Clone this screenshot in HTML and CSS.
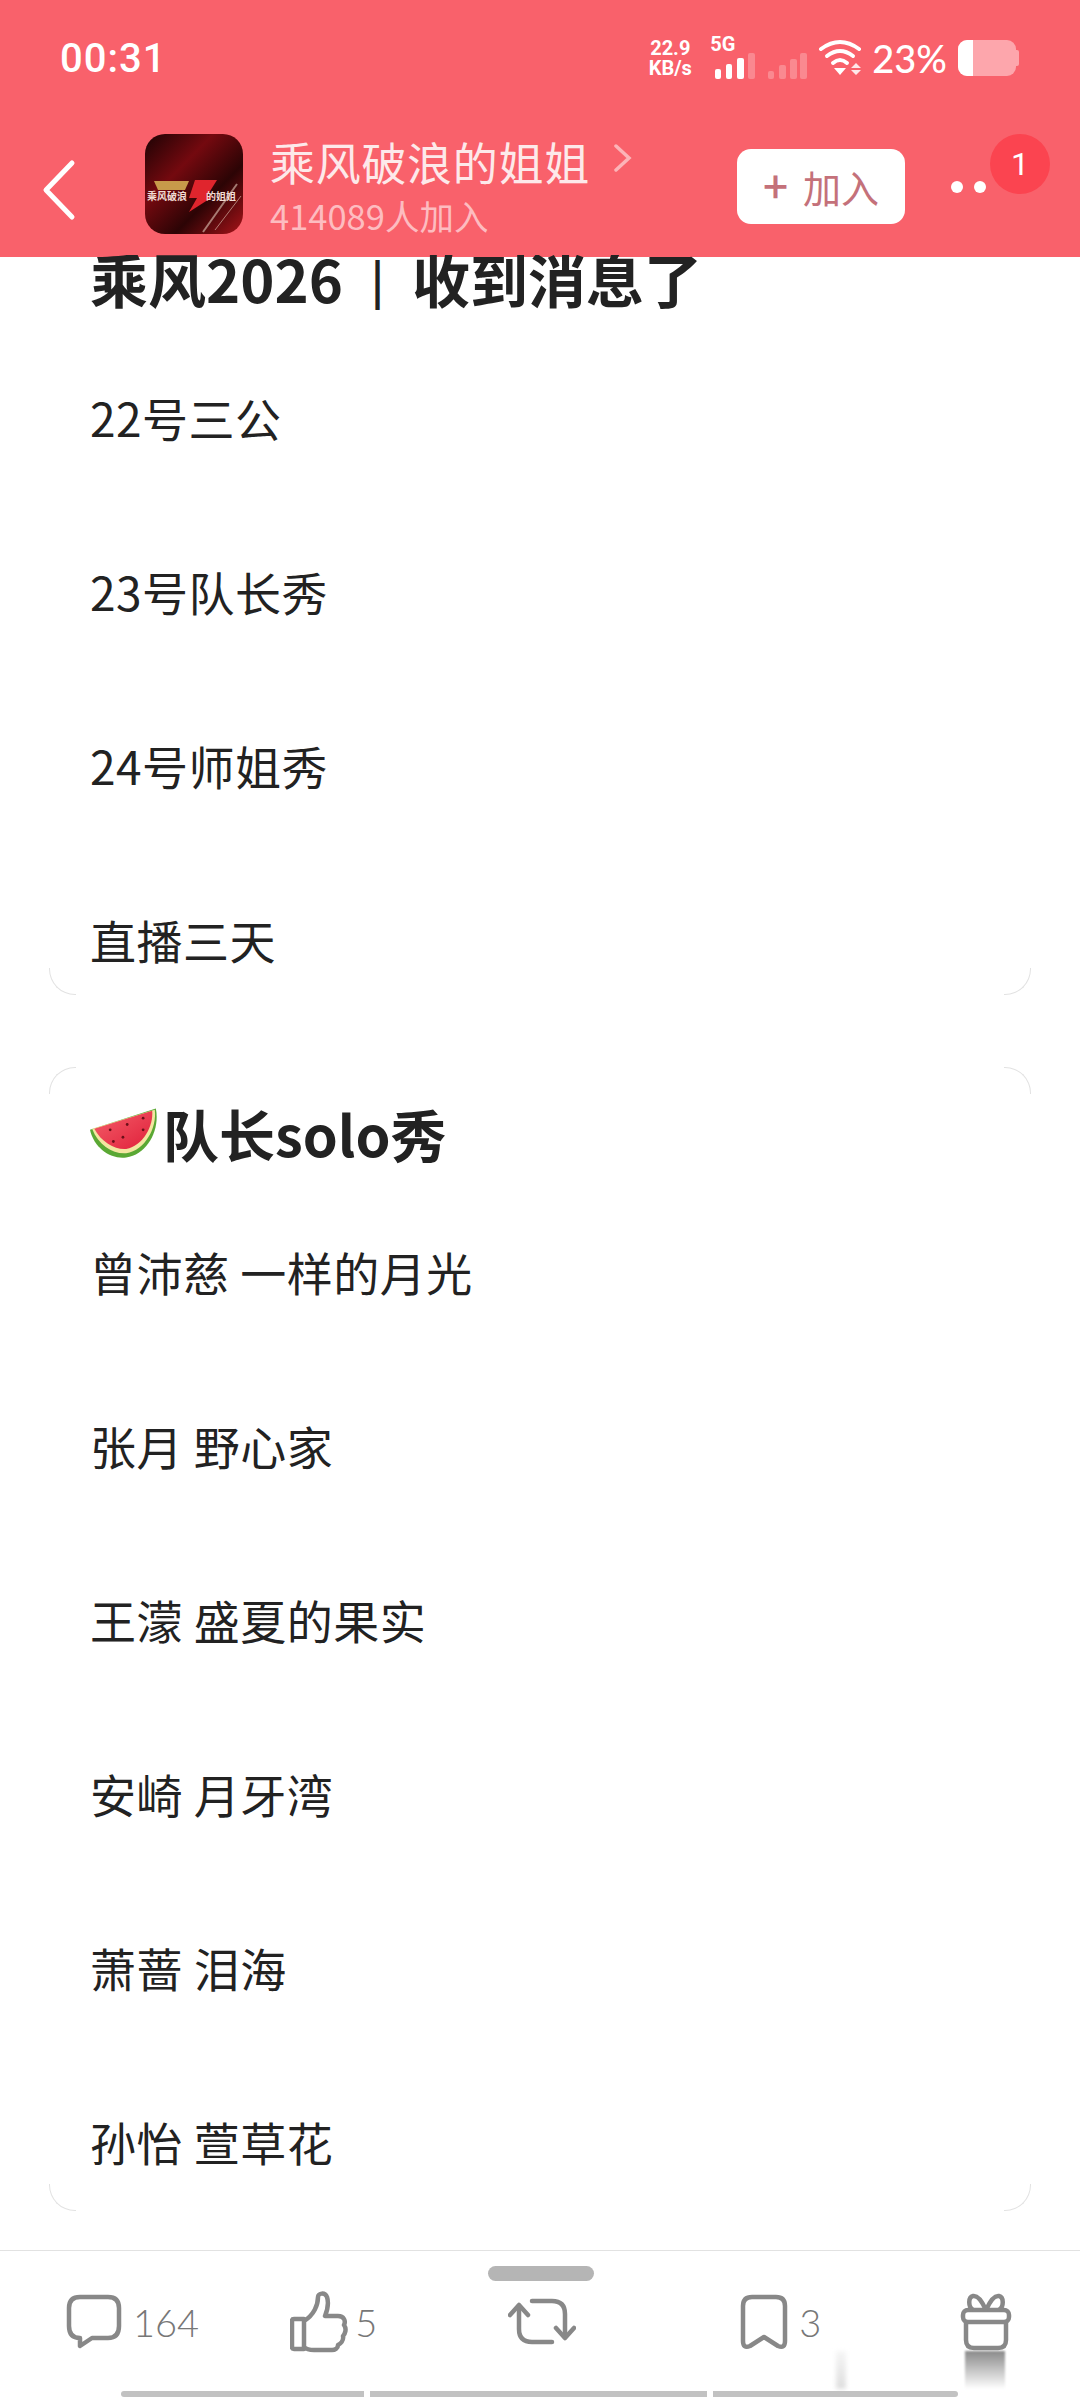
FILE: index.html
```html
<!DOCTYPE html>
<html lang="zh">
<head>
	<title>乘风破浪的姐姐</title>
	<meta charset="UTF-8">
	<link rel="stylesheet" href="styles.css">
</head>
<body>
<div class="phone">

<header class="top">
	<div class="status">
		<span class="clock">00:31</span>
		<div class="status-right">
			<span class="speed"><b>22.9</b><b>KB/s</b></span>
			<span class="net">5G</span>
			<svg class="signal" width="92" height="28" viewBox="0 0 92 28">
				<g fill="#fff">
					<rect x="0" y="17" width="6" height="10" rx="2"/>
					<rect x="11" y="12" width="6" height="15" rx="2"/>
					<rect x="22" y="6" width="7" height="21" rx="2"/>
				</g>
				<g fill="#fff" opacity=".25">
					<rect x="33" y="1" width="7" height="26" rx="2"/>
					<rect x="53" y="19" width="6" height="8" rx="2"/>
					<rect x="64" y="13" width="7" height="14" rx="2"/>
					<rect x="75" y="7" width="7" height="20" rx="2"/>
					<rect x="85" y="1" width="7" height="26" rx="2"/>
				</g>
			</svg>
			<svg class="wifi" width="46" height="38" viewBox="0 0 46 38">
				<g fill="none" stroke="#fff" stroke-width="4" stroke-linecap="round">
					<path d="M3 10 Q22 -4 41 10"/>
					<path d="M9 17 Q22 7 35 17"/>
					<path d="M15 24 Q22 18 29 24"/>
				</g>
				<path d="M16 29 L28 29 L22 36 Z" fill="#fff"/>
				<path d="M38 24 L43 29 H33 Z M33 31 H43 L38 36 Z" fill="#fff" opacity=".85"/>
			</svg>
			<span class="pct">23%</span>
			<div class="battery"><div class="battery-fill"></div></div>
			<div class="battery-nub"></div>
		</div>
	</div>

	<nav class="nav">
		<svg class="back" width="34" height="62" viewBox="0 0 34 62">
			<path d="M30 4 L4 31 L30 58" fill="none" stroke="#fff" stroke-width="5" stroke-linecap="round" stroke-linejoin="round"/>
		</svg>
		<svg class="avatar" width="98" height="100" viewBox="0 0 98 100">
			<defs>
				<linearGradient id="cover" x1="0" y1="0" x2="1" y2="1">
					<stop offset="0" stop-color="#1c0304"/>
					<stop offset=".35" stop-color="#74090f"/>
					<stop offset=".65" stop-color="#2c0405"/>
					<stop offset="1" stop-color="#a81319"/>
				</linearGradient>
			</defs>
			<rect width="98" height="100" rx="20" fill="url(#cover)"/>
			<path d="M9 47 H44 L40 56 H13 Z" fill="#c79a4a"/>
			<path d="M50 46 H72 L62 62 H69 L44 78 L52 64 H44 Z" fill="#e0252d"/>
			<g stroke="#e0c8b8" opacity=".6">
				<path d="M58 98 L92 50" stroke-width="2"/>
				<path d="M70 96 L96 62" stroke-width="1"/>
			</g>
			<text class="avatar-text" x="2" y="66">乘风破浪</text>
			<text class="avatar-text" x="61" y="66">的姐姐</text>
		</svg>
		<div class="group">
			<div class="group-name">乘风破浪的姐姐
				<svg class="more" width="18" height="28" viewBox="0 0 18 28"><path d="M2 2 L15 14 L2 26" fill="none" stroke="#fcb4b8" stroke-width="3.5" stroke-linecap="round"/></svg>
			</div>
			<div class="group-count">414089人加入</div>
		</div>
		<button class="join"><span class="plus">+</span>加入</button>
		<div class="menu">
			<i class="dot"></i><i class="dot"></i>
			<span class="badge">1</span>
		</div>
	</nav>
</header>

<main class="feed">
	<section class="card first">
		<h2 class="card-title">乘风2026<span class="sep">|</span>收到消息了</h2>
		<p class="line">22号三公</p>
		<p class="line">23号队长秀</p>
		<p class="line">24号师姐秀</p>
		<p class="line">直播三天</p>
		<i class="corner bl"></i><i class="corner br"></i>
	</section>

	<section class="card second">
		<i class="corner tl"></i><i class="corner tr"></i>
		<h2 class="card-title">
			<svg class="melon" width="68" height="54" viewBox="0 0 64 50">
				<defs>
					<linearGradient id="flesh" x1="0" y1="0" x2="1" y2="1">
						<stop offset="0" stop-color="#f4606a"/>
						<stop offset="1" stop-color="#e01f3a"/>
					</linearGradient>
				</defs>
				<path d="M0 22 C4 40 20 50 34 48 C54 45 66 22 62 2 Z" fill="#5aa834"/>
				<path d="M2 21 C8 37 22 45 34 44 C52 41 63 20 61 3 Z" fill="#f2e6a0"/>
				<path d="M4 21 C11 34 24 41 34 40 C50 37 60 18 58.500 4 Z" fill="url(#flesh)"/>
				<g fill="#6b1018">
					<circle cx="19" cy="22" r="1.300"/><circle cx="35" cy="17" r="1.300"/><circle cx="50" cy="11" r="1.300"/>
					<circle cx="22" cy="33" r="1.300"/><circle cx="31" cy="29" r="1.300"/><circle cx="50" cy="22" r="1.300"/>
				</g>
			</svg>队长solo秀
		</h2>
		<p class="line">曾沛慈 一样的月光</p>
		<p class="line">张月 野心家</p>
		<p class="line">王濛 盛夏的果实</p>
		<p class="line">安崎 月牙湾</p>
		<p class="line">萧蔷 泪海</p>
		<p class="line">孙怡 萱草花</p>
		<i class="corner bl"></i><i class="corner br"></i>
	</section>
</main>

<footer class="bar">
	<div class="handle"></div>
	<div class="actions">
		<div class="action comment">
			<svg width="56" height="56" viewBox="0 0 56 56"><path d="M14 3 H42 Q53 3 53 14 V32 Q53 44 42 44 H26 L14 52 V44 H14 Q3 44 3 32 V14 Q3 3 14 3 Z" fill="none" stroke="#888" stroke-width="4.5" stroke-linejoin="round"/></svg>
			<span>164</span>
		</div>
		<div class="action like">
			<svg width="58" height="62" viewBox="0 0 58 62"><path d="M14 28 V58 H4 Q2 58 2 56 V30 Q2 28 4 28 Z M14 30 C24 24 28 14 28 6 C28 2 35 1 37 6 C39 12 37 20 35 25 H48 C54 25 56 30 54 34 C57 38 55 43 53 45 C54 50 50 53 48 54 C48 57 45 59 42 59 H24 C20 59 16 58 14 56" fill="none" stroke="#888" stroke-width="4.5" stroke-linejoin="round" stroke-linecap="round"/></svg>
			<span>5</span>
		</div>
		<div class="action repost">
			<svg width="68" height="50" viewBox="0 0 68 50"><g fill="none" stroke="#888" stroke-width="4.5" stroke-linecap="round" stroke-linejoin="round"><path d="M2 18 L11 8 L20 18"/><path d="M11 9 V32 Q11 45 24 45 H44"/><path d="M24 4 H44 Q57 4 57 17 V40"/><path d="M48 31 L57 41 L66 31"/></g></svg>
		</div>
		<div class="action bookmark">
			<svg width="48" height="56" viewBox="0 0 48 56"><path d="M12 3 H36 Q45 3 45 12 V47 Q45 55 38 52 L24 43 L10 52 Q3 55 3 47 V12 Q3 3 12 3 Z" fill="none" stroke="#888" stroke-width="4.5" stroke-linejoin="round"/></svg>
			<span>3</span>
		</div>
		<div class="action gift">
			<svg width="52" height="58" viewBox="0 0 52 58"><g fill="none" stroke="#888" stroke-width="4.5" stroke-linejoin="round"><rect x="3" y="17" width="46" height="12" rx="5"/><path d="M6 29 V47 Q6 55 14 55 H38 Q46 55 46 47 V29"/><path d="M26 17 C22 8 18 2 13 3 C8 4 8 14 13 17"/><path d="M26 17 C30 8 34 2 39 3 C44 4 44 14 39 17"/></g></svg>
		</div>
	</div>
	<div class="smear main"></div>
	<div class="smear faint"></div>
	<div class="gesture">
		<i class="seg one"></i><i class="seg two"></i><i class="seg three"></i>
	</div>
</footer>

</div>
</body>
</html>
```

FILE: styles.css
```css
html, body {
	margin: 0;
	padding: 0;
	background-color: #fff;
}
body {
	font-family: "Noto Sans CJK SC", "Noto Sans", sans-serif;
	color: #222;
}
.phone {
	width: 1080px;
	height: 2400px;
	display: flex;
	flex-direction: column;
	overflow: hidden;
}

/* top red part */
.top {
	background-color: #f9616b;
	height: 257px;
	flex: none;
	color: #fff;
}
.status {
	height: 116px;
	padding: 0 61px 0 60px;
	display: flex;
	align-items: center;
	justify-content: space-between;
}
.clock {
	font-family: Roboto, sans-serif;
	font-size: 40px;
	font-weight: 500;
	letter-spacing: 1px;
}
.status-right {
	display: flex;
	align-items: center;
}
.speed {
	display: flex;
	flex-direction: column;
	font-family: Roboto, sans-serif;
	font-size: 20px;
	line-height: 20px;
	align-items: center;
	width: 44px;
}
.speed b {
	font-weight: 700;
}
.net {
	font-family: Roboto, sans-serif;
	font-size: 20px;
	font-weight: 700;
	margin-left: 18px;
	align-self: flex-start;
	line-height: 18px;
	width: 24px;
}
.signal {
	margin-left: -19px;
	margin-top: 16px;
}
.wifi {
	margin-left: 11px;
}
.pct {
	font-family: Lato, sans-serif;
	font-size: 38px;
	font-weight: 500;
	margin-left: 8px;
}
.battery {
	width: 58px;
	height: 36px;
	margin-left: 11px;
	border-radius: 9px;
	background-color: #fda6ac;
	overflow: hidden;
}
.battery-fill {
	width: 15px;
	height: 36px;
	background-color: #fff;
}
.battery-nub {
	width: 3px;
	height: 16px;
	border-radius: 0 2px 2px 0;
	background-color: #fda6ac;
}

.nav {
	display: flex;
	align-items: center;
	height: 120px;
	margin-top: 8px;
	padding-left: 42px;
}
.back {
	flex: none;
	margin-top: 12px;
}
.avatar {
	flex: none;
	margin-left: 69px;
}
.avatar-text {
	font-family: "Noto Sans CJK SC", serif;
	font-size: 10px;
	font-weight: 700;
	fill: #f2dcd4;
}
.group {
	margin-left: 27px;
	padding-top: 2px;
	width: 466px;
	flex: none;
}
.group-name {
	font-size: 45px;
	line-height: 56px;
	color: #fde9ea;
	letter-spacing: .7px;
	display: flex;
	align-items: center;
}
.more {
	margin: -8px 0 0 24px;
}
.group-count {
	font-size: 34.500px;
	line-height: 42px;
	margin-top: 4px;
	color: #fdbcc0;
}
.join {
	flex: none;
	width: 168px;
	height: 75px;
	margin-left: 1px;
	margin-top: 4px;
	border: 0;
	border-radius: 14px;
	background-color: #fff;
	color: #c4717a;
	font-family: inherit;
	font-size: 38px;
	padding: 0;
}
.plus {
	font-size: 44px;
	font-weight: 500;
	line-height: 38px;
	margin-right: 15px;
}
.menu {
	position: relative;
	flex: none;
	margin-left: 46px;
	margin-top: 6px;
	display: flex;
	gap: 11px;
}
.dot {
	width: 12px;
	height: 12px;
	border-radius: 50%;
	background-color: #fff;
}
.badge {
	position: absolute;
	left: 39px;
	top: -47px;
	width: 60px;
	height: 60px;
	border-radius: 50%;
	background-color: #fb4450;
	color: #fff;
	font-family: Roboto, sans-serif;
	font-size: 32px;
	line-height: 60px;
	text-align: center;
}

/* post content */
.feed {
	flex: 1;
	overflow: hidden;
	margin-top: -2px;
}
.card {
	position: relative;
	margin: 0 49px;
	padding: 0 0 0 41px;
}
.card.first {
	margin-top: -14px;
	height: 754px;
}
.card.second {
	margin-top: 72px;
	height: 1115px;
	padding-top: 29px;
}
.card-title {
	margin: 0 0 14px;
	font-size: 56px;
	line-height: 74px;
	font-weight: 700;
	color: #222;
	display: flex;
	align-items: center;
}
.first .card-title {
	font-size: 58px;
	margin-bottom: 15px;
}
.sep {
	font-size: 44px;
	font-weight: 700;
	margin: 0 28px;
}
.line {
	margin: 0;
	height: 174px;
	font-size: 46px;
	letter-spacing: .5px;
	line-height: 174px;
	color: #222;
}
.melon {
	flex: none;
	margin-right: 5px;
}
.corner {
	position: absolute;
	width: 26px;
	height: 26px;
	border: 0 solid #e2e2e2;
}
.corner.bl {
	left: 0;
	bottom: 0;
	border-left-width: 1px;
	border-bottom-width: 1px;
	border-bottom-left-radius: 26px;
}
.corner.br {
	right: 0;
	bottom: 0;
	border-right-width: 1px;
	border-bottom-width: 1px;
	border-bottom-right-radius: 26px;
}
.corner.tl {
	left: 0;
	top: 0;
	border-left-width: 1px;
	border-top-width: 1px;
	border-top-left-radius: 26px;
}
.corner.tr {
	right: 0;
	top: 0;
	border-right-width: 1px;
	border-top-width: 1px;
	border-top-right-radius: 26px;
}

/* bottom bar */
.bar {
	position: relative;
	flex: none;
	height: 149px;
	border-top: 1px solid #e2e2e2;
	background-color: #fff;
	color: #777;
}
.handle {
	position: absolute;
	left: 488px;
	top: 15px;
	width: 106px;
	height: 15px;
	border-radius: 8px;
	background-color: #b5b5b5;
}
.actions {
	display: flex;
	align-items: center;
	height: 100px;
	padding-top: 21px;
}
.action {
	display: flex;
	align-items: center;
	font-family: Lato, sans-serif;
	font-size: 38px;
	font-weight: 300;
}
.action svg {
	display: block;
}
.comment {
	margin-left: 66px;
	gap: 11px;
}
.like {
	margin-left: 91px;
	gap: 7px;
}
.repost {
	margin-left: 131px;
}
.bookmark {
	margin-left: 164px;
	gap: 11px;
}
.gift {
	margin-left: 139px;
}
.smear {
	position: absolute;
	top: 100px;
	height: 38px;
}
.smear.main {
	left: 965px;
	width: 40px;
	background: linear-gradient(#8a8a8a, #fff);
	filter: blur(1px);
}
.smear.faint {
	left: 836px;
	width: 10px;
	background: linear-gradient(#f6f6f6, #dedede);
	filter: blur(2px);
}
.gesture {
	position: absolute;
	left: 121px;
	top: 140px;
	display: flex;
	gap: 6px;
}
.seg {
	height: 6px;
	background-color: #c2c2c2;
}
.seg.one {
	width: 243px;
	border-radius: 3px 0 0 3px;
}
.seg.two {
	width: 337px;
}
.seg.three {
	width: 245px;
	border-radius: 0 3px 3px 0;
}
```
